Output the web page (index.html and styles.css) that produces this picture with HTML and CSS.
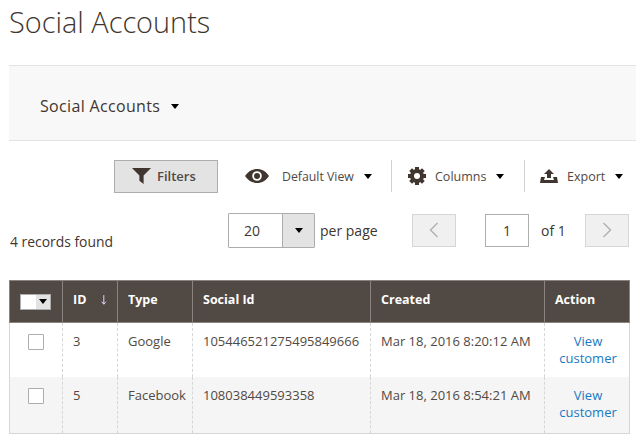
FILE: index.html
```html
<!DOCTYPE html>
<html lang="en">
<head>
<meta charset="utf-8">
<title>Social Accounts</title>
<link rel="stylesheet" href="styles.css">
</head>
<body>
<h1 class="title">Social Accounts</h1>
<div class="bookmark-bar"><span class="bookmark">Social Accounts</span><i class="caret caret-title"></i></div>
<div class="actions">
  <button class="filters"><svg width="19" height="16" viewBox="0 0 18 15"><path d="M0 0H18L11 7V15L7 12V7Z" fill="#41362f"/></svg>Filters</button>
  <div class="action view"><svg width="24" height="14" viewBox="0 0 24 14"><path fill="#41362f" fill-rule="evenodd" d="M0 7C3 2.500 7 0 12 0S21 2.500 24 7C21 11.500 17 14 12 14S3 11.500 0 7ZM12 2.200A4.800 4.800 0 1 0 12 11.800A4.800 4.800 0 1 0 12 2.200Z"/><circle cx="12" cy="7" r="3" fill="#41362f"/></svg><span class="small">Default View</span><i class="caret"></i></div>
  <div class="action columns"><svg width="18" height="18" viewBox="0 0 18 18"><g fill="#41362f"><rect x="7" y="0" width="4" height="18"/><rect x="7" y="0" width="4" height="18" transform="rotate(45 9 9)"/><rect x="7" y="0" width="4" height="18" transform="rotate(90 9 9)"/><rect x="7" y="0" width="4" height="18" transform="rotate(135 9 9)"/></g><circle cx="9" cy="9" r="7" fill="#41362f"/><circle cx="9" cy="9" r="3" fill="#fff"/></svg><span class="small">Columns</span><i class="caret"></i></div>
  <div class="action export"><svg width="18" height="14" viewBox="0 0 18 14"><path fill="#41362f" d="M9 0L14 5H11V9H7V5H4Z"/><path fill="#41362f" d="M1 8H5L4 11H14L13 8H17L18 14H0Z"/></svg><span class="small">Export</span><i class="caret"></i></div>
</div>
<div class="pager-row">
  <div class="records">4 records found</div>
  <div class="pager">
    <div class="select"><span class="select-value">20</span><span class="select-btn"><i class="caret"></i></span></div>
    <span class="per-page">per page</span>
    <span class="nav-btn prev"><svg width="10" height="16" viewBox="0 0 10 16"><path d="M8.500 1L1.500 8L8.500 15" fill="none" stroke="#b3b3b3" stroke-width="1.500"/></svg></span>
    <span class="page-input">1</span>
    <span class="of">of 1</span>
    <span class="nav-btn next"><svg width="10" height="16" viewBox="0 0 10 16"><path d="M1.500 1L8.500 8L1.500 15" fill="none" stroke="#b3b3b3" stroke-width="1.500"/></svg></span>
  </div>
</div>
<table class="grid">
  <colgroup><col class="c1"><col class="c2"><col class="c3"><col class="c4"><col class="c5"><col class="c6"></colgroup>
  <thead>
    <tr>
      <th class="check-head"><span class="massaction"><span class="mass-box"></span><span class="mass-btn"><i class="caret caret-mass"></i></span></span></th>
      <th><span class="id-head">ID<svg class="sort" width="8" height="14" viewBox="0 0 8 14"><path d="M4 0V13M1 9.500L4 13L7 9.500" fill="none" stroke="#dcd9ff" stroke-width="1.400"/></svg></span></th>
      <th>Type</th><th>Social Id</th><th>Created</th><th>Action</th>
    </tr>
  </thead>
  <tbody>
    <tr>
      <td class="check-cell"><span class="checkbox"></span></td><td>3</td><td>Google</td><td>105446521275495849666</td><td>Mar 18, 2016 8:20:12 AM</td><td class="action-cell"><a href="#">View customer</a></td>
    </tr>
    <tr class="alt">
      <td class="check-cell"><span class="checkbox"></span></td><td>5</td><td>Facebook</td><td>108038449593358</td><td>Mar 18, 2016 8:54:21 AM</td><td class="action-cell"><a href="#">View customer</a></td>
    </tr>
  </tbody>
</table>
</body>
</html>
```

FILE: styles.css
```css
* { box-sizing: border-box; }
html, body { margin: 0; padding: 0; }
body {
  width: 636px;
  height: 440px;
  overflow: hidden;
  font-family: "Open Sans", sans-serif;
  font-size: 14px;
  color: #41362f;
  background: #fff;
  padding-left: 9px;
}
.title {
  margin: 0;
  height: 65px;
  padding-top: 3px;
  font-size: 28.900px;
  line-height: 38px;
  font-weight: 300;
  color: #41362f;
}
.caret {
  display: inline-block;
  width: 0;
  height: 0;
  border-left: 4.500px solid transparent;
  border-right: 4.500px solid transparent;
  border-top: 5px solid #000;
}
.bookmark-bar {
  height: 76px;
  background: #f8f8f8;
  border-top: 1px solid #e3e3e3;
  border-bottom: 1px solid #e3e3e3;
  display: flex;
  align-items: center;
  padding: 6px 0 0 31px;
}
.bookmark { font-size: 16px; letter-spacing: 0.33px; }
.caret-title { margin-left: 11px; }
.actions {
  display: flex;
  align-items: center;
  height: 32px;
  margin-top: 19px;
  padding-left: 105px;
}
.filters {
  width: 104px;
  height: 33px;
  display: flex;
  align-items: center;
  padding: 0 0 0 17px;
  gap: 6px;
  background: #e3e3e3;
  border: 1px solid #adadad;
  font-family: inherit;
  font-size: 13px;
  font-weight: 600;
  color: #514943;
}
.action { display: flex; align-items: center; height: 32px; }
.small { font-size: 12.300px; color: #514943; }
.view { margin-left: 27px; width: 147px; border-right: 1px solid #d1d1d1; }
.view .small { margin-left: 13px; }
.view .caret { margin-left: 10px; }
.columns { width: 133px; padding-left: 16px; border-right: 1px solid #d1d1d1; }
.columns .small { margin-left: 9px; font-size: 12.500px; }
.columns .caret { margin-left: 10px; }
.export { padding-left: 15px; }
.export .small { margin-left: 9px; font-size: 12.500px; }
.export .caret { margin-left: 10px; }
.pager-row {
  display: flex;
  justify-content: space-between;
  height: 34px;
  margin-top: 21px;
  padding-right: 7px;
}
.records { margin-top: 19px; padding-left: 1px; font-size: 13.900px; line-height: 20px; }
.pager { display: flex; align-items: center; }
.select {
  display: flex;
  width: 87px;
  height: 35px;
  border: 1px solid #adadad;
  border-radius: 1px;
}
.select-value { width: 53px; padding-left: 15px; line-height: 33px; font-size: 14px; }
.select-btn {
  width: 32px;
  background: #e3e3e3;
  border-left: 1px solid #adadad;
  display: flex;
  align-items: center;
  justify-content: center;
}
.per-page { margin-left: 5px; width: 92px; }
.nav-btn {
  width: 44px;
  height: 33px;
  background: #f0f0f0;
  border: 1px solid #d6d6d6;
  display: flex;
  align-items: center;
  justify-content: center;
}
.page-input {
  margin-left: 29px;
  width: 44px;
  height: 33px;
  border: 1px solid #adadad;
  text-align: center;
  line-height: 31px;
}
.of { margin-left: 12px; width: 44px; }
.grid {
  margin-top: 33px;
  width: 620px;
  table-layout: fixed;
  border-collapse: collapse;
  font-size: 13px;
}
.c1 { width: 53px; }
.c2 { width: 55px; }
.c3 { width: 75px; }
.c4 { width: 178px; }
.c5 { width: 174px; }
.c6 { width: 85px; }
th {
  height: 42px;
  background: #514943;
  color: #fff;
  border: 1px solid #8a837f;
  font-size: 12.500px;
  font-weight: 700;
  text-align: left;
  padding: 0 10px 4px;
}
td {
  height: 54px;
  padding: 10px 10px 0;
  vertical-align: top;
  line-height: 17px;
  border-left: 1px dashed #d6d6d6;
  border-right: 1px dashed #d6d6d6;
  color: #514943;
}
tr.alt td { height: 57px; background: #f5f5f5; border-bottom: 1px solid #d6d6d6; }
tbody td:first-child { border-left: 1px solid #d6d6d6; }
tbody td:last-child { border-right: 1px solid #d6d6d6; }
.check-head { padding: 0 0 0 10px; }
.massaction { display: flex; width: 31px; height: 16px; border: 1px solid #adadad; }
.mass-box { width: 15px; background: #fff; }
.mass-btn { width: 14px; background: #e3e3e3; display: flex; align-items: center; justify-content: center; }
.id-head { display: flex; align-items: center; }
.sort { margin-left: 15px; }
.check-cell { padding: 0; }
.checkbox {
  display: block;
  width: 16px;
  height: 16px;
  margin: 11px 0 0 18px;
  background: #fff;
  border: 1px solid #adadad;
  border-radius: 1px;
}
.action-cell { text-align: center; padding-left: 9px; padding-right: 7px; }
a { color: #1979c3; text-decoration: none; }
```
